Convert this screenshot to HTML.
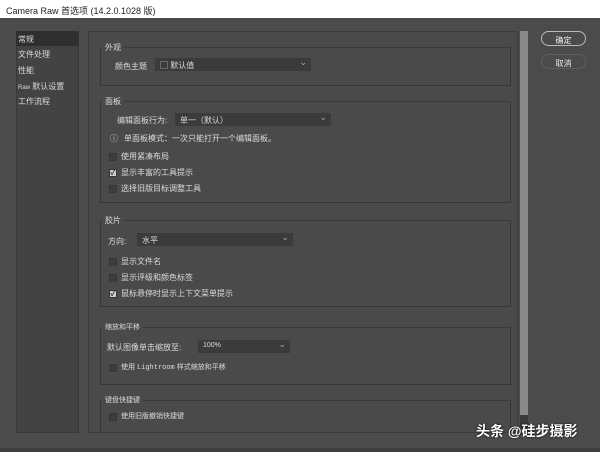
<!DOCTYPE html><html><head><meta charset="utf-8"><style>
*{margin:0;padding:0;box-sizing:border-box}
body{width:600px;height:452px;background:#4b4b4b;font-family:"Liberation Sans","Noto Sans CJK SC",sans-serif;font-size:8px;color:#dcdcdc;position:relative;overflow:hidden}
.a{position:absolute;white-space:nowrap}
.title{left:0;top:0;width:600px;height:18px;background:#fff;color:#222;font-size:9px;padding:4px 6px}
.side{left:16px;top:31px;width:63px;height:402px;background:#434343;border:1px solid #393939}
.sel{left:16px;top:31px;width:63px;height:15px;background:#2f2f2f}
.main{left:88px;top:31px;width:430px;height:402px;border:1px solid #3c3c3c;background:#4a4a4a}
.box{border:1px solid #363636;border-top:1px solid #3a3a3a;background:#4a4a4a}
.lbl{background:#4a4a4a;padding:0 3px}
.dd{background:#3b3b3b;height:13px;padding:2px 5px;color:#ddd}
.dd:after{content:"⌄";position:absolute;right:4px;top:-1px;font-size:9px;color:#aaa}
.cb{width:8px;height:8px;background:#3d3d3d;border:1px solid #363636}
.ck{background:#cfcfcf;color:#333;font-size:8px;line-height:6px;text-align:center;font-weight:bold}
.btn{border-radius:8px;width:45px;height:15px;text-align:center;padding-top:3px;color:#eee}
</style></head><body>
<div class="a title">Camera Raw 首选项 (14.2.0.1028 版)</div>
<div class="a side"></div><div class="a sel"></div>
<div class="a" style="left:18px;top:34px">常规</div>
<div class="a" style="left:18px;top:49px">文件处理</div>
<div class="a" style="left:18px;top:65px">性能</div>
<div class="a" style="left:18px;top:81px"><span style="font-size:6px">Raw</span> 默认设置</div>
<div class="a" style="left:18px;top:96px">工作流程</div>
<div class="a main"></div>
<div class="a box" style="left:100px;top:47px;width:411px;height:39px"></div>
<div class="a lbl" style="left:102px;top:42px">外观</div>
<div class="a" style="left:115px;top:61px">颜色主题</div>
<div class="a dd" style="left:155px;top:58px;width:156px">▢ 默认值</div>
<div class="a box" style="left:100px;top:101px;width:411px;height:102px"></div>
<div class="a lbl" style="left:102px;top:96px">面板</div>
<div class="a" style="left:117px;top:115px">编辑面板行为:</div>
<div class="a dd" style="left:175px;top:113px;width:156px">单一（默认）</div>
<div class="a" style="left:110px;top:133px">ⓘ</div>
<div class="a" style="left:124px;top:133px">单面板模式：一次只能打开一个编辑面板。</div>
<div class="a cb" style="left:109px;top:153px"></div><div class="a" style="left:121px;top:151px">使用紧凑布局</div>
<div class="a cb ck" style="left:109px;top:169px">✓</div><div class="a" style="left:121px;top:167px">显示丰富的工具提示</div>
<div class="a cb" style="left:109px;top:185px"></div><div class="a" style="left:121px;top:183px">选择旧版目标调整工具</div>
<div class="a box" style="left:100px;top:220px;width:411px;height:87px"></div>
<div class="a lbl" style="left:102px;top:215px">胶片</div>
<div class="a" style="left:108px;top:236px">方向:</div>
<div class="a dd" style="left:137px;top:233px;width:156px">水平</div>
<div class="a cb" style="left:109px;top:258px"></div><div class="a" style="left:121px;top:256px">显示文件名</div>
<div class="a cb" style="left:109px;top:274px"></div><div class="a" style="left:121px;top:272px">显示评级和颜色标签</div>
<div class="a cb ck" style="left:109px;top:290px">✓</div><div class="a" style="left:121px;top:288px">鼠标悬停时显示上下文菜单提示</div>
<div class="a box" style="left:100px;top:327px;width:411px;height:58px"></div>
<div class="a lbl" style="left:102px;top:322px;font-size:7px">缩放和平移</div>
<div class="a" style="left:107px;top:342px">默认图像单击缩放至:</div>
<div class="a dd" style="left:198px;top:340px;width:92px;font-size:7px">100%</div>
<div class="a cb" style="left:109px;top:364px"></div><div class="a" style="left:121px;top:362px;font-size:7px">使用 <span style="font-family:'Liberation Mono'">Lightroom</span> 样式缩放和平移</div>
<div class="a box" style="left:100px;top:400px;width:411px;height:32px;border-bottom:none"></div>
<div class="a lbl" style="left:102px;top:395px;font-size:7px">键盘快捷键</div>
<div class="a cb" style="left:109px;top:413px"></div><div class="a" style="left:121px;top:411px;font-size:7px">使用旧版撤销快捷键</div>
<div class="a" style="left:520px;top:31px;width:8px;height:384px;background:#8a8a8a"></div>
<div class="a" style="left:520px;top:415px;width:8px;height:20px;background:#3a3a3a"></div>
<div class="a btn" style="left:541px;top:31px;border:1px solid #bbb">确定</div>
<div class="a btn" style="left:541px;top:54px;border:1px solid #5e5e5e">取消</div>
<div class="a" style="left:0;top:448px;width:600px;height:4px;background:#3e3e3e"></div>
<div class="a" style="left:476px;top:421px;font-size:14px;color:#fff;font-weight:bold;text-shadow:0 0 2px #000">头条 @硅步摄影</div>
</body></html>
